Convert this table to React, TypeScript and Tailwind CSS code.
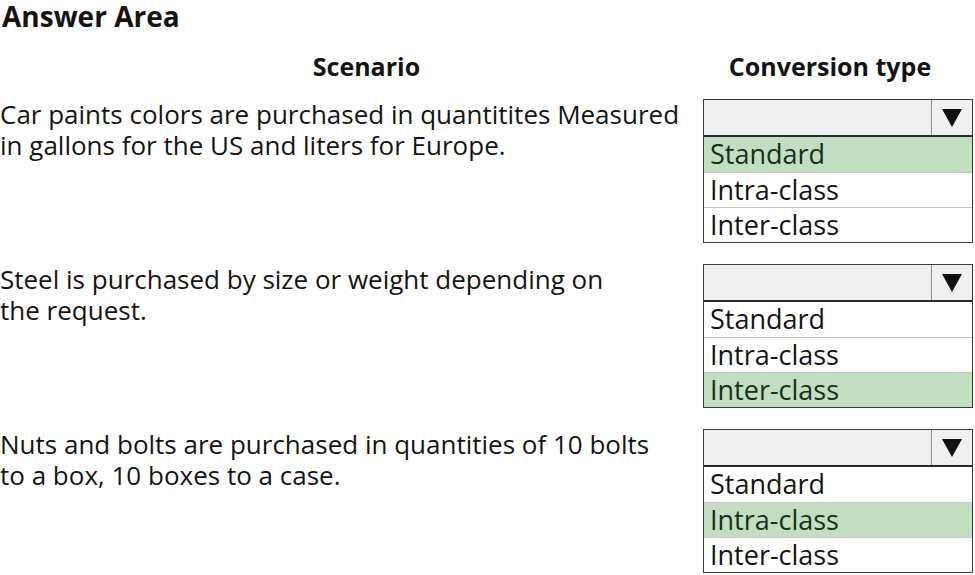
import React from "react";

type Row = {
  text: string[];
  selected: number;
};

const options = ["Standard", "Intra-class", "Inter-class"];

const rows: Row[] = [
  {
    text: [
      "Car paints colors are purchased in quantitites Measured",
      "in gallons for the US and liters for Europe.",
    ],
    selected: 0,
  },
  {
    text: ["Steel is purchased by size or weight depending on", "the request."],
    selected: 2,
  },
  {
    text: [
      "Nuts and bolts are purchased in quantities of 10 bolts",
      "to a box, 10 boxes to a case.",
    ],
    selected: 1,
  },
];

function Dropdown({ selected }: { selected: number }) {
  return (
    <div className="w-[270px] border border-[#3a3a3a] bg-white">
      {/* closed select */}
      <div className="flex h-[37px] border-b-2 border-[#2a2a2a] bg-[#f0f0f0]">
        <div className="flex-1" />
        <div className="flex w-[41px] items-center justify-center border-l border-[#8a8a8a]">
          <svg width="20" height="18" viewBox="0 0 20 18">
            <polygon points="0,0 20,0 10,18" fill="#111" />
          </svg>
        </div>
      </div>
      {/* options */}
      {options.map((opt, i) => (
        <div
          key={opt}
          className={
            "h-[35px] pl-[6px] text-[27px] leading-[34px] " +
            (i > 0 ? "border-t border-[#c4c4c4] " : "") +
            (i === selected ? "bg-[#c3dfc2] text-[#15301a]" : "text-[#141414]")
          }
        >
          {opt}
        </div>
      ))}
    </div>
  );
}

export default function App() {
  return (
    <div
      className="h-[575px] w-[975px] overflow-hidden bg-white text-[#141414]"
      style={{ fontFamily: "'Open Sans', 'Liberation Sans', sans-serif" }}
    >
      <h1 className="pl-[2px] text-[28px] leading-[32px] font-bold">Answer Area</h1>

      <div className="mt-[18px] grid grid-cols-[703px_272px]">
        <div className="pl-[30px] text-center text-[25px] leading-[32px] font-bold">Scenario</div>
        <div className="pr-[18px] text-center text-[25px] leading-[32px] font-bold">Conversion type</div>
      </div>

      <div className="mt-[17px] flex flex-col gap-[21px]">
        {rows.map((row, idx) => (
          <div key={idx} className="grid grid-cols-[703px_272px]">
            <div className="text-[26px] leading-[31px]">
              {row.text.map((line) => (
                <div key={line}>{line}</div>
              ))}
            </div>
            <Dropdown selected={row.selected} />
          </div>
        ))}
      </div>
    </div>
  );
}
